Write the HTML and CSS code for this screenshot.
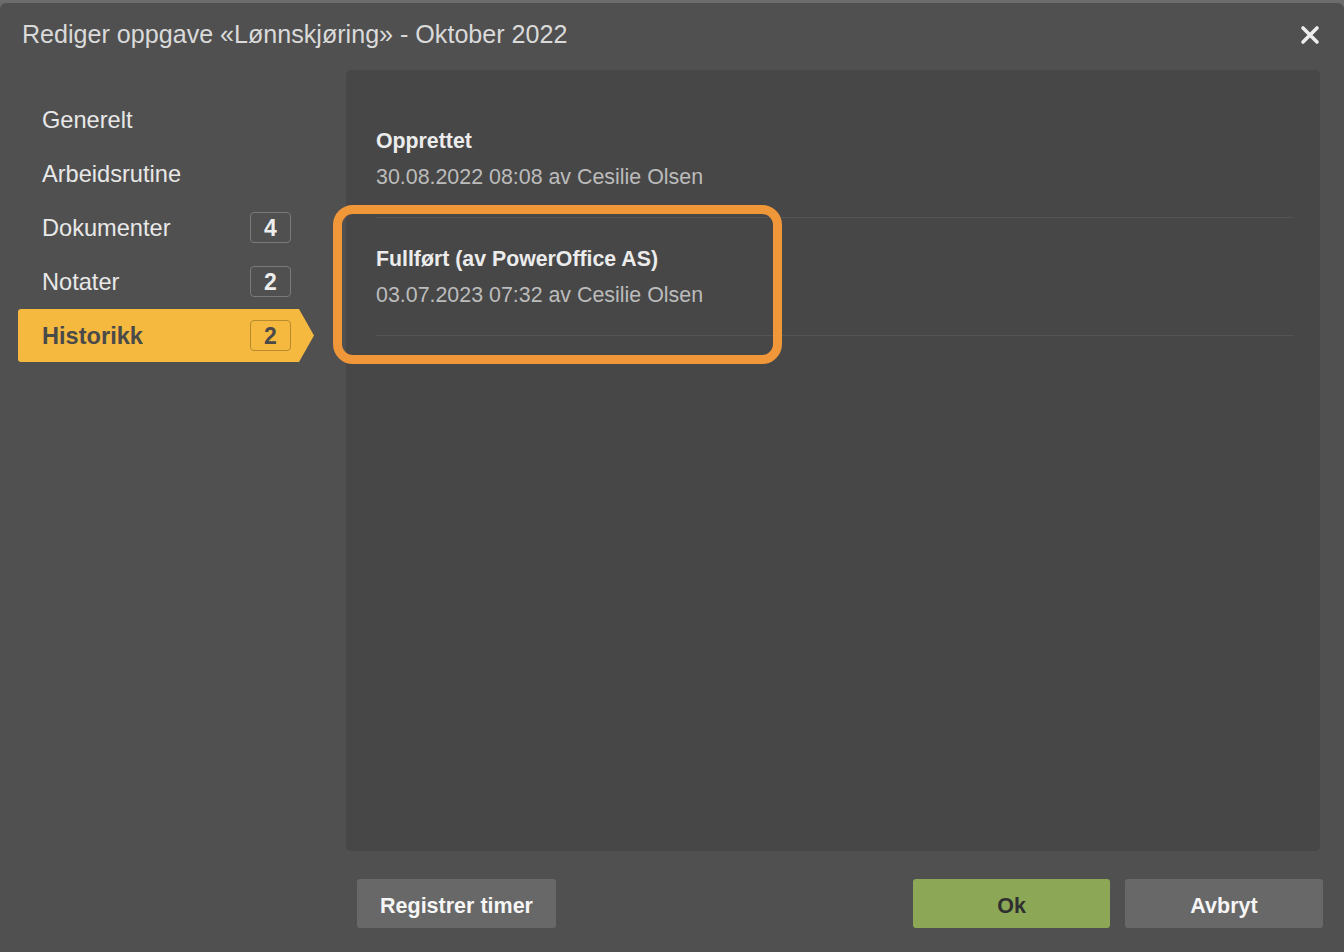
FILE: index.html
```html
<!DOCTYPE html>
<html>
  <head>
    <meta charset="utf-8" />
    <title>Rediger oppgave</title>
    <link rel="stylesheet" href="styles.css">
  </head>
  <body>
    <div class="dialog">
      <header class="dialog-header">
        <h1>Rediger oppgave «Lønnskjøring» - Oktober 2022</h1>
        <button class="close" aria-label="Lukk">
          <svg width="20" height="20" viewBox="0 0 20 20">
            <path d="M3 3 L17 17 M17 3 L3 17" stroke="#ededed" stroke-width="3.6" stroke-linecap="round" />
          </svg>
        </button>
      </header>
      <div class="dialog-body">
        <nav class="tabs">
          <a class="tab">Generelt</a>
          <a class="tab">Arbeidsrutine</a>
          <a class="tab">Dokumenter <span class="badge">4</span></a>
          <a class="tab">Notater <span class="badge">2</span></a>
          <a class="tab active">Historikk <span class="badge">2</span></a>
        </nav>
        <main class="panel">
          <div class="entry">
            <div class="entry-title">Opprettet</div>
            <div class="entry-meta">30.08.2022 08:08 av Cesilie Olsen</div>
          </div>
          <div class="entry">
            <div class="entry-title">Fullført (av PowerOffice AS)</div>
            <div class="entry-meta">03.07.2023 07:32 av Cesilie Olsen</div>
            <span class="highlight"></span>
          </div>
        </main>
      </div>
      <footer class="dialog-footer">
        <button class="btn">Registrer timer</button>
        <span class="spacer"></span>
        <button class="btn btn-ok">Ok</button>
        <button class="btn">Avbryt</button>
      </footer>
    </div>
  </body>
</html>
```

FILE: styles.css
```css
* {
  box-sizing: border-box;
  font-family: "Liberation Sans", Arial, sans-serif;
}
html,
body {
  margin: 0;
  height: 100%;
  overflow: hidden;
}
body {
  background: #6c6c6c;
}
.dialog {
  margin-top: 3px;
  height: 949px;
  background: #505050;
  border-radius: 6px 6px 0 0;
  display: flex;
  flex-direction: column;
}
.dialog-header {
  height: 67px;
  display: flex;
  align-items: center;
  padding: 0 24px 0 22px;
}
.dialog-header h1 {
  margin: 0;
  flex: 1;
  font-size: 25.1px;
  font-weight: normal;
  color: #dadada;
  padding-bottom: 4px;
}
.close {
  border: 0;
  background: none;
  padding: 0;
  width: 20px;
  height: 20px;
  margin-bottom: 4px;
}
.dialog-body {
  display: flex;
  height: 781px;
}
.tabs {
  width: 346px;
  padding: 22px 0 0 18px;
  display: flex;
  flex-direction: column;
}
.tab {
  width: 296px;
  height: 54px;
  display: flex;
  align-items: center;
  justify-content: space-between;
  padding: 2px 23px 0 24px;
  font-size: 23.6px;
  color: #e8e8e8;
}
.tab.active {
  height: 53px;
  margin-top: 1px;
  background: #f5b940;
  color: #4a4a4a;
  font-weight: bold;
  border-radius: 3px 0 0 3px;
  clip-path: polygon(0 0, calc(100% - 15px) 0, 100% 50%, calc(100% - 15px) 100%, 0 100%);
}
.badge {
  width: 41px;
  height: 31px;
  margin-top: -2px;
  border: 1px solid #7a7a7a;
  border-radius: 4px;
  display: flex;
  align-items: center;
  justify-content: center;
  padding-top: 2px;
  font-size: 23px;
  font-weight: bold;
  color: #ededed;
}
.tab.active .badge {
  border-color: #b88a2e;
  color: #4a4a4a;
}
.panel {
  width: 974px;
  background: #474747;
  border-radius: 5px;
  padding: 30px 27px 0 30px;
}
.entry {
  position: relative;
  padding: 30px 0 29px;
  border-bottom: 1px solid #535353;
}
.entry-title {
  font-size: 21.3px;
  font-weight: bold;
  line-height: 22px;
  color: #ececec;
  margin-bottom: 14px;
}
.entry-meta {
  font-size: 21.4px;
  line-height: 22px;
  color: #bcbcbc;
}
/* orange marker drawn around the second history entry */
.highlight {
  position: absolute;
  left: -43px;
  top: -13px;
  width: 449px;
  height: 159px;
  border: 9px solid #f0973a;
  border-radius: 20px;
  pointer-events: none;
}
.dialog-footer {
  display: flex;
  align-items: flex-start;
  gap: 15px;
  padding: 28px 21px 0 357px;
}
.spacer {
  flex: 1;
}
.btn {
  width: 198px;
  height: 49px;
  border: 0;
  border-radius: 3px;
  background: #686868;
  color: #f6f6f6;
  font-size: 21.5px;
  font-weight: bold;
  padding-top: 6px;
}
.dialog-footer .btn:first-child {
  width: 199px;
}
.btn-ok {
  width: 197px;
  background: #8ca856;
  color: #2f2f2f;
}
```
